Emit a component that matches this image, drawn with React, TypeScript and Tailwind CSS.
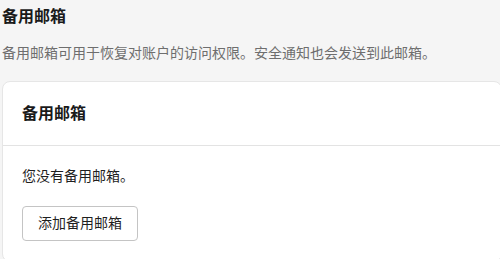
import React from 'react';

const font = { fontFamily: '"Liberation Sans", "Noto Sans CJK SC", sans-serif' };

export default function App() {
  return (
    <div className="min-h-screen bg-[#f5f5f5] pl-[2px] pt-[5px] overflow-hidden" style={font}>
      {/* Section header */}
      <h2 className="text-[16px] leading-[24px] font-bold text-[#1a1a1a]">备用邮箱</h2>
      <p className="mt-[14px] text-[14px] leading-[20px] text-[#6e6e6e]">
        备用邮箱可用于恢复对账户的访问权限。安全通知也会发送到此邮箱。
      </p>

      {/* Card */}
      <div className="mt-[18px] w-[500px] rounded-lg bg-white border border-[#e6e6e6]">
        <div className="h-16 flex items-center px-[19px] border-b border-[#e3e3e3]">
          <h3 className="text-[16px] font-bold text-[#1a1a1a]">备用邮箱</h3>
        </div>
        <div className="px-[19px] pt-5 pb-5">
          <p className="text-[14px] leading-[20px] text-[#1f1f1f]">您没有备用邮箱。</p>
          <button className="mt-5 h-[35px] px-[15px] rounded border border-[#c4c4c4] bg-white text-[14px] text-[#1f1f1f]">
            添加备用邮箱
          </button>
        </div>
      </div>
    </div>
  );
}
